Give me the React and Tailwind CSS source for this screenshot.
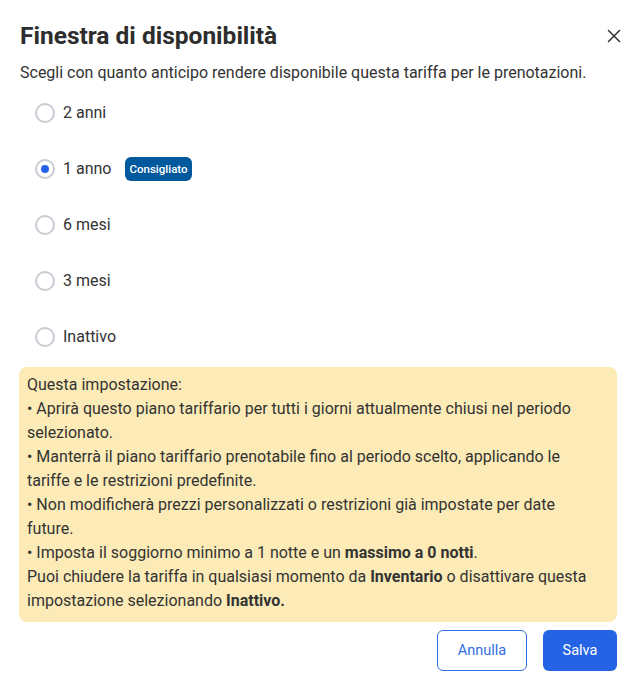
import React, { useState } from 'react';
import { X } from 'lucide-react';

const options = [
  { id: '2y', label: '2 anni' },
  { id: '1y', label: '1 anno', badge: 'Consigliato' },
  { id: '6m', label: '6 mesi' },
  { id: '3m', label: '3 mesi' },
  { id: 'off', label: 'Inattivo' },
];

function Radio({ checked }) {
  return (
    <span className="flex h-[20px] w-[20px] items-center justify-center rounded-full border-2 border-[#c9ccd2] bg-white">
      {checked && <span className="h-[8px] w-[8px] rounded-full bg-[#2563eb]" />}
    </span>
  );
}

export default function App() {
  const [selected, setSelected] = useState('1y');

  return (
    <div className="h-[691px] w-[640px] bg-white pl-[19px] pr-[23px] font-['Roboto',sans-serif] text-[#2b2b2b]">
      {/* Header */}
      <div className="flex h-[60px] items-end justify-between pb-[9px]">
        <h2 className="pl-px text-[24.5px] font-bold leading-[30px] text-[#2d2d2d]">Finestra di disponibilità</h2>
        <button className="mb-[4px] mr-[-8px] text-[#333]">
          <X size={22} strokeWidth={1.6} />
        </button>
      </div>
      <p className="pl-px text-[16px] leading-[26px] text-[#333]">
        Scegli con quanto anticipo rendere disponibile questa tariffa per le prenotazioni.
      </p>

      {/* Options */}
      <div className="-mt-[1px] flex flex-col">
        {options.map((o) => (
          <label
            key={o.id}
            onClick={() => setSelected(o.id)}
            className="flex h-[56px] cursor-pointer items-center gap-[8px] pl-[16px]"
          >
            <Radio checked={selected === o.id} />
            <span className="text-[16px] text-[#333]">{o.label}</span>
            {o.badge && (
              <span className="ml-[6px] rounded-[6px] bg-[#00599c] px-[4px] py-[3px] text-[11.5px] font-medium leading-[18px] text-white">
                {o.badge}
              </span>
            )}
          </label>
        ))}
      </div>

      {/* Notice */}
      <div className="mt-[2px] rounded-[8px] bg-[#fcebb6] px-[8px] pb-[9px] pt-[6px] text-[16px] leading-[24px] text-[#333]">
        <p>Questa impostazione:</p>
        <p>
          • Aprirà questo piano tariffario per tutti i giorni attualmente chiusi nel periodo
          <br />
          selezionato.
        </p>
        <p>
          • Manterrà il piano tariffario prenotabile fino al periodo scelto, applicando le
          <br />
          tariffe e le restrizioni predefinite.
        </p>
        <p>
          • Non modificherà prezzi personalizzati o restrizioni già impostate per date
          <br />
          future.
        </p>
        <p>
          • Imposta il soggiorno minimo a 1 notte e un <strong className="font-bold">massimo a 0 notti</strong>.
        </p>
        <p>
          Puoi chiudere la tariffa in qualsiasi momento da <strong className="font-bold">Inventario</strong> o disattivare questa
          <br />
          impostazione selezionando <strong className="font-bold">Inattivo.</strong>
        </p>
      </div>

      {/* Footer */}
      <div className="mt-[8px] flex justify-end gap-[16px]">
        <button className="h-[41px] w-[90px] rounded-[6px] border border-[#2f6de0] bg-white text-[14.5px] text-[#2f6de0]">
          Annulla
        </button>
        <button className="h-[41px] w-[74px] rounded-[6px] bg-[#2464e4] text-[14.5px] text-white">Salva</button>
      </div>
    </div>
  );
}
